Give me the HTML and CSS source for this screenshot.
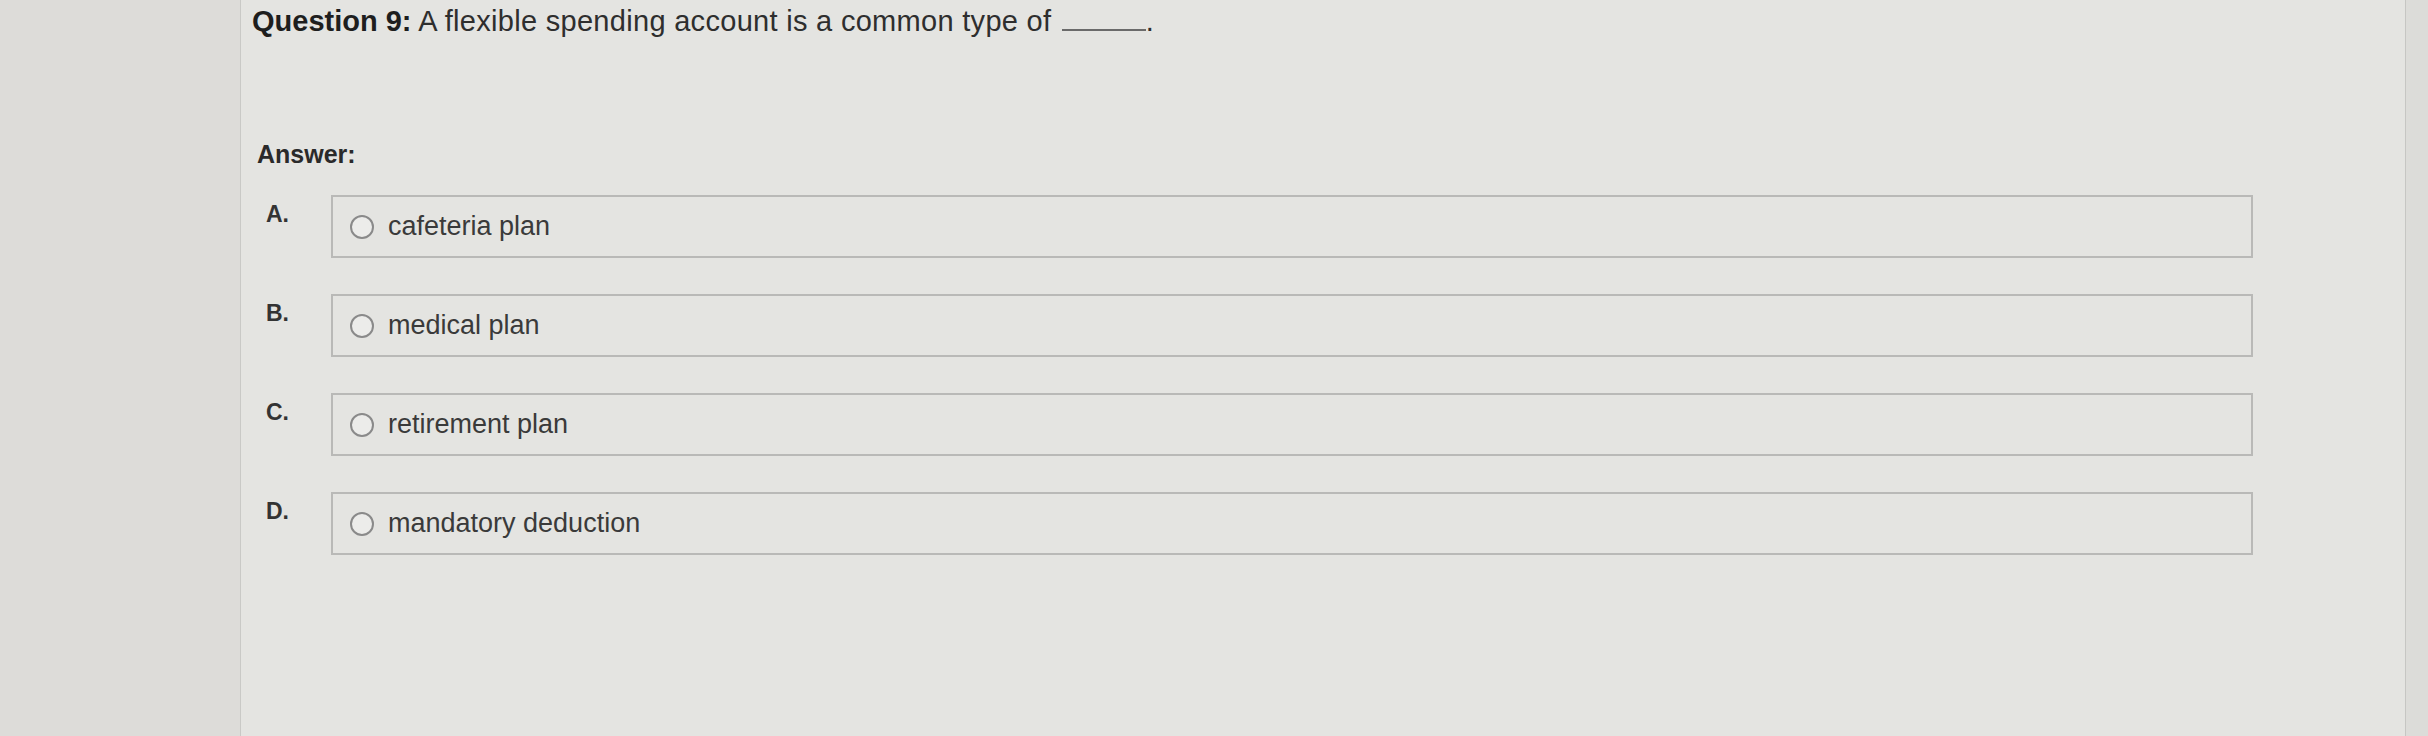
FILE: index.html
```html
<!DOCTYPE html>
<html lang="en">
<head>
    <meta charset="UTF-8">
    <meta name="viewport" content="width=device-width, initial-scale=1.0">
    <title>Question 9</title>
    <link rel="stylesheet" href="styles.css">
</head>
<body>

    <div class="page">
        <div class="side"></div>

        <div class="main">
            <p class="question">
                <b>Question 9:</b> A flexible spending account is a common type of <span class="blank"></span>.
            </p>

            <p class="answer-label">Answer:</p>

            <div class="options">
                <div class="option">
                    <span class="letter">A.</span>
                    <label class="choice">
                        <input type="radio" name="q9" value="a">
                        <span>cafeteria plan</span>
                    </label>
                </div>
                <div class="option">
                    <span class="letter">B.</span>
                    <label class="choice">
                        <input type="radio" name="q9" value="b">
                        <span>medical plan</span>
                    </label>
                </div>
                <div class="option">
                    <span class="letter">C.</span>
                    <label class="choice">
                        <input type="radio" name="q9" value="c">
                        <span>retirement plan</span>
                    </label>
                </div>
                <div class="option">
                    <span class="letter">D.</span>
                    <label class="choice">
                        <input type="radio" name="q9" value="d">
                        <span>mandatory deduction</span>
                    </label>
                </div>
            </div>
        </div>

        <div class="side-right"></div>
    </div>

</body>
</html>
```

FILE: styles.css
```css
body {
    margin: 0;
    font-family: "Liberation Sans", Arial, sans-serif;
    background-color: #e4e4e1;
    color: #2b2b2b;
}

.page {
    display: flex;
    height: 736px;
}

.side {
    width: 240px;
    flex-shrink: 0;
    background-color: #dddcd9;
    border-right: 1px solid #c9c9c6;
}

.main {
    flex: 1;
    padding: 0 0 0 11px;
}

.side-right {
    width: 22px;
    flex-shrink: 0;
    background-color: #dcdcd9;
    border-left: 1px solid #c6c6c3;
}

.question {
    margin: 0;
    padding-top: 5px;
    font-size: 29px;
    line-height: 32px;
    letter-spacing: 0.3px;
    color: #2e2e2e;
}

.question b {
    color: #1e1e1e;
    letter-spacing: 0;
}

.blank {
    display: inline-block;
    width: 84px;
    margin-left: 2px;
    border-bottom: 2px solid #6a6a6a;
}

.answer-label {
    margin: 102px 0 0 5px;
    font-size: 25px;
    line-height: 30px;
    font-weight: bold;
    color: #2a2a2a;
}

.options {
    margin-top: 26px;
    padding-left: 14px;
}

.option {
    display: flex;
    align-items: flex-start;
    margin-bottom: 36px;
}

.letter {
    width: 65px;
    flex-shrink: 0;
    padding-top: 6px;
    font-size: 23px;
    font-weight: bold;
    color: #333;
}

.choice {
    display: flex;
    align-items: center;
    width: 1901px;
    height: 59px;
    padding-left: 17px;
    border: 2px solid #b9b9b7;
    font-size: 27px;
    color: #3a3a3a;
}

.choice input {
    appearance: none;
    width: 24px;
    height: 24px;
    margin: 0 14px 0 0;
    border: 2px solid #8a8a8a;
    border-radius: 50%;
    background-color: #ececea;
}
```
